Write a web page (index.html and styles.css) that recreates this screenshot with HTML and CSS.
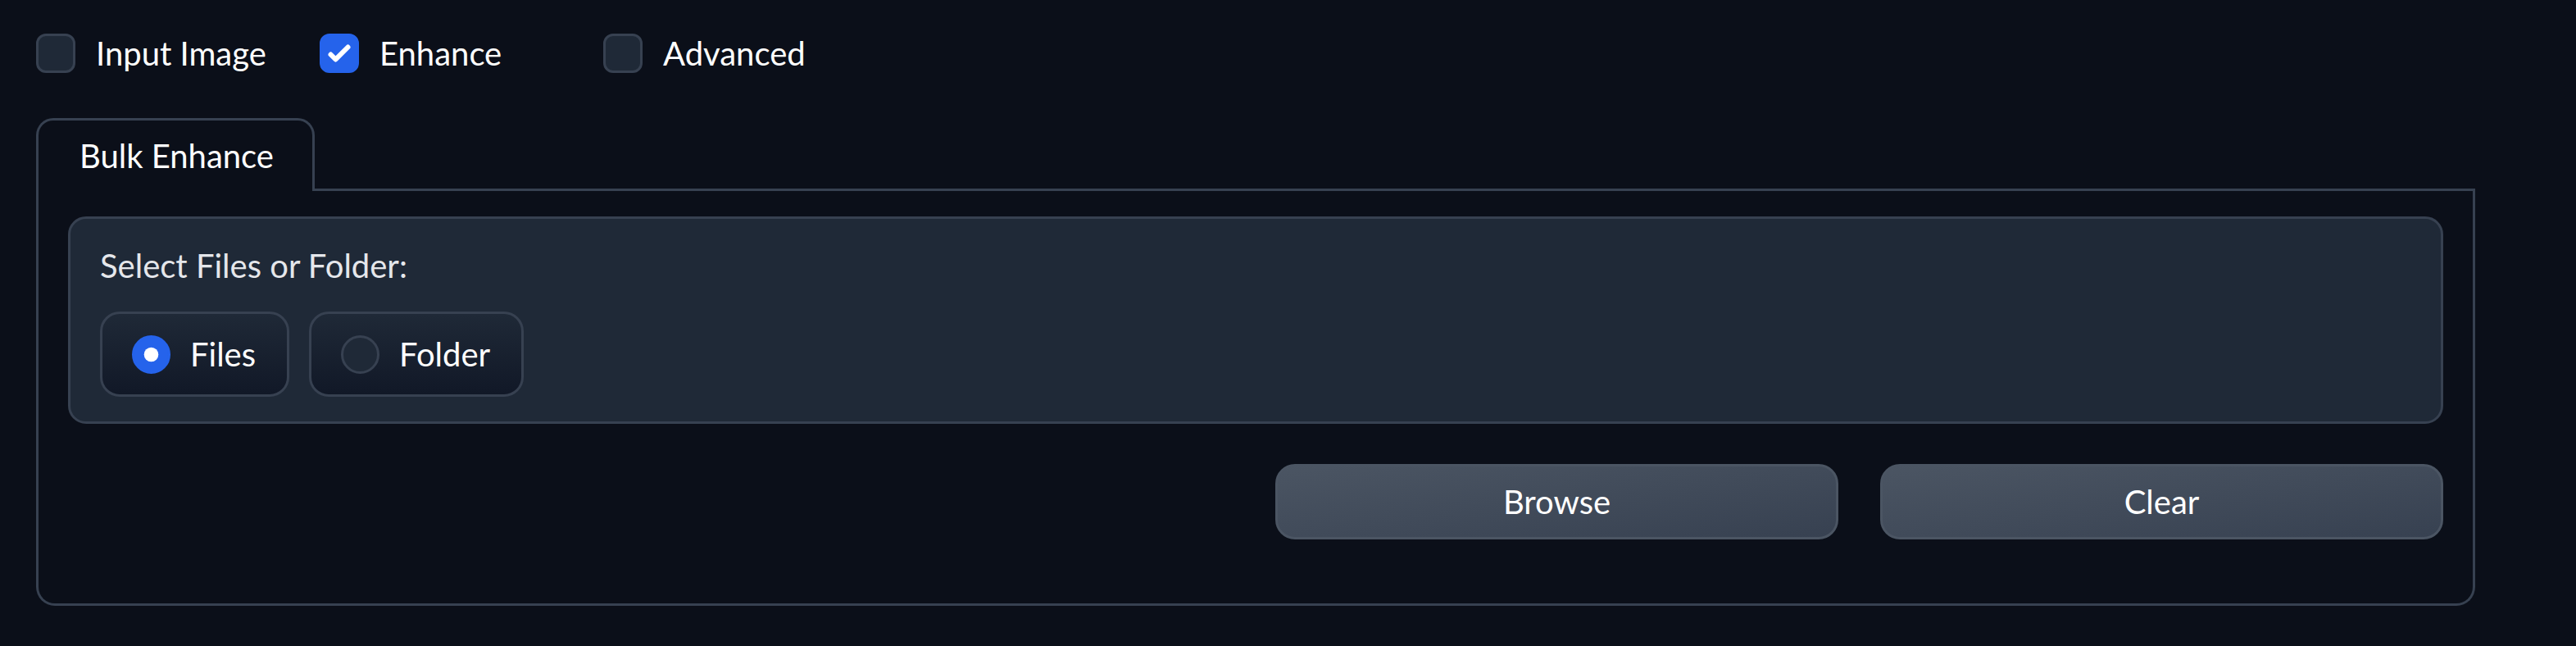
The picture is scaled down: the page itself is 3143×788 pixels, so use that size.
FILE: index.html
```html
<!DOCTYPE html>
<html lang="en">
<head>
<meta charset="utf-8">
<title>Bulk Enhance</title>
<link rel="stylesheet" href="styles.css">
</head>
<body>
<div class="app">
  <div class="checks">
    <label class="check">
      <span class="box"></span>
      <span class="check-text">Input Image</span>
    </label>
    <label class="check">
      <span class="box box-on">
        <svg viewBox="0 0 16 16" class="tick"><path d="M12.207 4.793a1 1 0 010 1.414l-5 5a1 1 0 01-1.414 0l-2-2a1 1 0 011.414-1.414L6.5 9.086l4.293-4.293a1 1 0 011.414 0z" fill="#fff"/></svg>
      </span>
      <span class="check-text">Enhance</span>
    </label>
    <label class="check">
      <span class="box"></span>
      <span class="check-text">Advanced</span>
    </label>
  </div>

  <div class="tabs">
    <div class="tab-nav">
      <div class="tab-btn">Bulk Enhance</div>
      <div class="tab-fill"></div>
    </div>
    <div class="panel">
      <div class="block">
        <div class="block-label">Select Files or Folder:</div>
        <div class="radios">
          <label class="pill">
            <span class="dot dot-on">
              <svg viewBox="0 0 16 16" class="dot-svg"><circle cx="8" cy="8" r="3" fill="#fff"/></svg>
            </span>
            <span class="pill-text">Files</span>
          </label>
          <label class="pill">
            <span class="dot"></span>
            <span class="pill-text">Folder</span>
          </label>
        </div>
      </div>
      <div class="btn-row">
        <button class="btn">Browse</button>
        <button class="btn">Clear</button>
      </div>
    </div>
  </div>
</div>
</body>
</html>
```

FILE: styles.css
```css
html, body {
  margin: 0;
  padding: 0;
  background: #0b0f19;
}

body {
  font-family: "Lato", "Noto Sans", sans-serif;
  font-size: 40px;
  line-height: 49px;
  color: #f3f4f6;
}

.app {
  padding: 41px 123px 0 44px;
}

.checks {
  display: flex;
  align-items: center;
  height: 48px;
}

.check {
  display: flex;
  align-items: center;
  gap: 25px;
  width: 346px;
}

.box {
  box-sizing: border-box;
  width: 48px;
  height: 48px;
  border: 3px solid #374151;
  border-radius: 12px;
  background: #1f2937;
  display: flex;
  align-items: center;
  justify-content: center;
}

.box-on {
  background: #2563eb;
  border-color: #2563eb;
}

.tick {
  width: 48px;
  height: 48px;
  flex: none;
}

.check-text {
  color: #ffffff;
}

.tabs {
  margin-top: 55px;
}

.tab-nav {
  display: flex;
}

.tab-btn {
  box-sizing: border-box;
  height: 89px;
  padding: 19px 47px 18px 50px;
  border: 3px solid #374151;
  border-bottom: none;
  border-radius: 21px 21px 0 0;
  color: #ffffff;
  white-space: nowrap;
}

.tab-fill {
  flex: 1;
  border-bottom: 3px solid #374151;
}

.panel {
  border: 3px solid #374151;
  border-top: none;
  border-radius: 0 0 23px 23px;
  padding: 31px 36px 78px 36px;
}

.block {
  background: #1f2937;
  border: 3px solid #374151;
  border-radius: 22px;
  padding: 33px 36px 30px 36px;
}

.block-label {
  color: #e5e7eb;
}

.radios {
  display: flex;
  gap: 24px;
  margin-top: 31px;
}

.pill {
  box-sizing: border-box;
  height: 104px;
  display: flex;
  align-items: center;
  gap: 24px;
  padding: 0 38px 0 36px;
  border: 3px solid #374151;
  border-radius: 24px;
  background: linear-gradient(to top, #111827, #1f2937);
  color: #ffffff;
}

.dot {
  box-sizing: border-box;
  width: 47px;
  height: 47px;
  border-radius: 50%;
  border: 3px solid #374151;
  background: #1f2937;
  display: flex;
  align-items: center;
  justify-content: center;
}

.dot-on {
  background: #2563eb;
  border-color: #2563eb;
}

.dot-svg {
  width: 47px;
  height: 47px;
  flex: none;
}

.btn-row {
  display: flex;
  justify-content: flex-end;
  gap: 51px;
  margin-top: 49px;
}

.btn {
  box-sizing: border-box;
  width: 687px;
  height: 92px;
  border: 3px solid #4b5563;
  border-radius: 24px;
  background: linear-gradient(to bottom right, #4b5563, #374151);
  color: #ffffff;
  font-family: inherit;
  font-size: 40px;
  line-height: 49px;
  padding: 0;
}
```
